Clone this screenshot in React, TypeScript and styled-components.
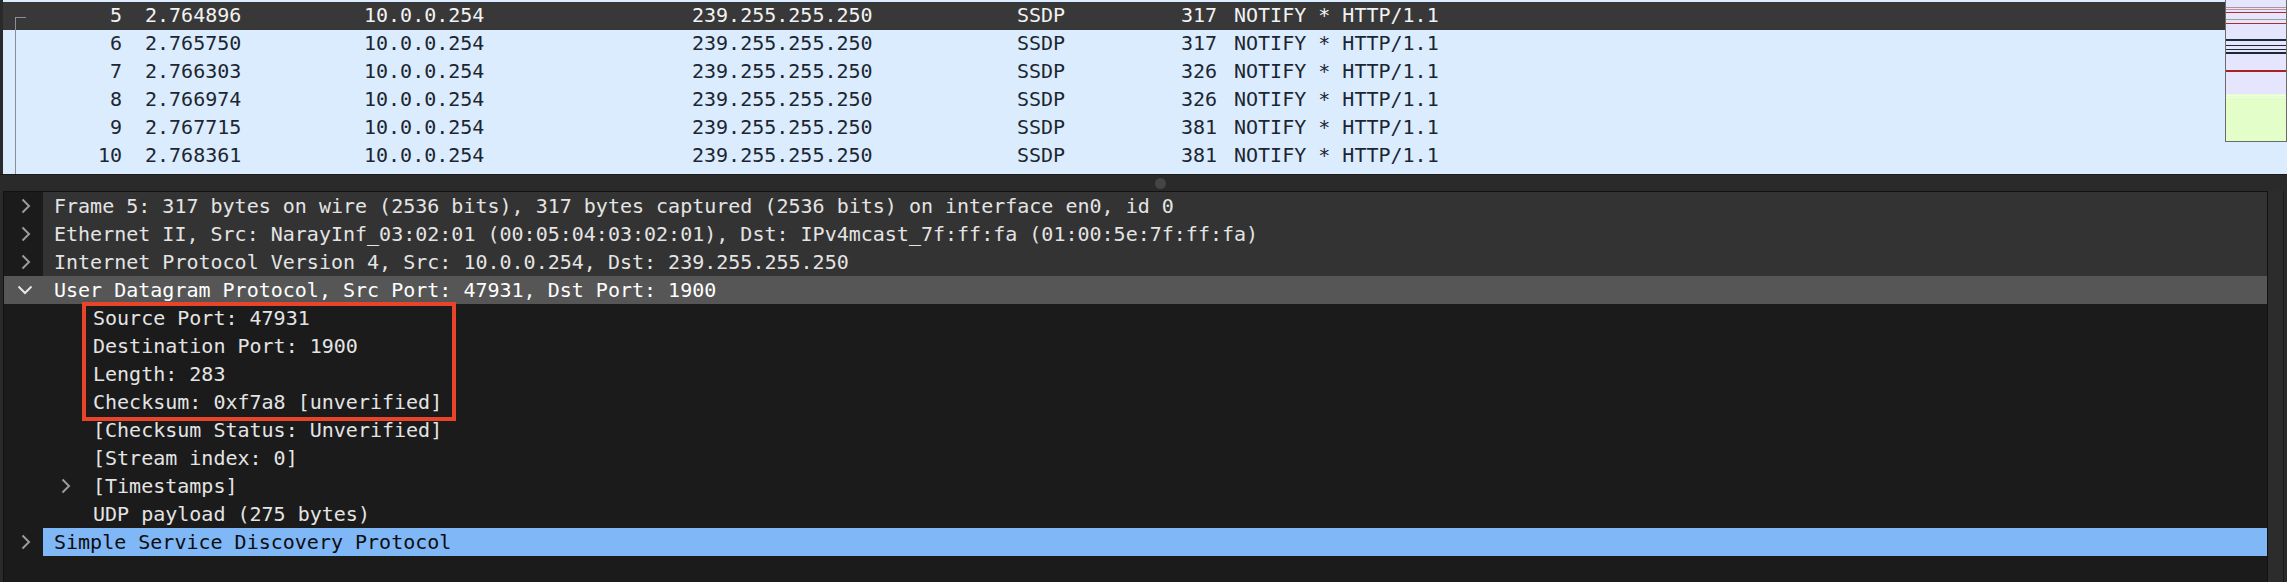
import React from 'react';
import styled, { createGlobalStyle, css } from 'styled-components';

const GlobalStyle = createGlobalStyle`
  html, body {
    margin: 0;
    padding: 0;
    background: #2a2a2a;
  }
  body {
    width: 2287px;
    height: 582px;
    overflow: hidden;
    font-family: "DejaVu Sans Mono", "Liberation Mono", monospace;
  }
`;

const Window = styled.div`
  width: 2287px;
  height: 582px;
  display: flex;
  flex-direction: column;
  background: #2a2a2a;
  overflow: hidden;
`;

/* ---------- packet list ---------- */

const PacketPane = styled.div`
  position: relative;
  height: 174px;
  margin-left: 3px;
  overflow: hidden;
  background: #dbecfe;
`;

const PacketList = styled.div`
  display: flex;
  flex-direction: column;
`;

type Tone = 'selected' | 'normal';
type Link = 'start' | 'mid' | 'none';

const PacketRow = styled.div<{ $tone: Tone }>`
  display: grid;
  grid-template-columns: 131px 219px 328px 325px 94px 123px 1fr;
  height: 28px;
  line-height: 27px;
  font-size: 20px;
  white-space: nowrap;
  background: ${(p) => (p.$tone === 'selected' ? '#383838' : '#dbecfe')};
  color: ${(p) => (p.$tone === 'selected' ? '#f2f2f2' : '#1b2631')};
`;

const Cell = styled.div<{ $align?: 'left' | 'right'; $pr?: number }>`
  position: relative;
  overflow: hidden;
  text-align: ${(p) => p.$align ?? 'left'};
  padding-left: ${(p) => (p.$align === 'right' ? 0 : 11)}px;
  padding-right: ${(p) => p.$pr ?? 0}px;
`;

const NoCell = styled(Cell)<{ $link: Link }>`
  ${(p) =>
    p.$link !== 'none' &&
    css`
      &::before {
        content: '';
        position: absolute;
        left: 12px;
        width: 1px;
        top: ${p.$link === 'start' ? '15px' : '0'};
        bottom: 0;
        background: #8a8f96;
      }
    `}
  ${(p) =>
    p.$link === 'start' &&
    css`
      &::after {
        content: '';
        position: absolute;
        left: 12px;
        top: 15px;
        width: 11px;
        height: 1px;
        background: #8a8f96;
      }
    `}
`;

const Minimap = styled.div`
  position: absolute;
  top: 0;
  right: 0;
  width: 60px;
  height: 141px;
  border: 1px solid #6b6b6b;
  border-top: none;
  background: #e5e5fd;
  svg {
    display: block;
  }
`;

/* ---------- splitter ---------- */

const Splitter = styled.div`
  height: 16px;
  border-top: 1px solid #1b1b1b;
  display: flex;
  align-items: center;
  padding-left: 1155px;
  background: #2a2a2a;
`;

const Handle = styled.div`
  width: 11px;
  height: 11px;
  border-radius: 50%;
  background: #454545;
`;

/* ---------- details tree ---------- */

const DetailArea = styled.div`
  flex: 1;
  display: flex;
  margin-left: 3px;
  min-height: 0;
`;

const Tree = styled.div`
  width: 2263px;
  border: 1px solid #121212;
  border-bottom: none;
  background: #1b1b1b;
  display: flex;
  flex-direction: column;
`;

const ScrollStrip = styled.div`
  width: 15px;
  background: #2c2c2c;
  border-right: 1px solid #1a1a1a;
`;

type RowKind = 'branch' | 'hover' | 'leaf' | 'selected';

const rowBg: Record<RowKind, string> = {
  branch: '#333333',
  hover: '#565656',
  leaf: '#1b1b1b',
  selected: '#80b7f6',
};
const rowFg: Record<RowKind, string> = {
  branch: '#e4e4e4',
  hover: '#ffffff',
  leaf: '#e4e4e4',
  selected: '#0d0d0d',
};

const TreeRow = styled.div<{ $kind: RowKind }>`
  display: flex;
  height: 28px;
  flex-shrink: 0;
  font-size: 20px;
  line-height: 28px;
  white-space: nowrap;
  background: ${(p) => (p.$kind === 'hover' ? rowBg.hover : '#1b1b1b')};
  color: ${(p) => rowFg[p.$kind]};
`;

const Gutter = styled.div<{ $open?: boolean }>`
  width: 39px;
  flex-shrink: 0;
  display: flex;
  align-items: center;
  padding-left: ${(p) => (p.$open ? 13 : 17)}px;
  box-sizing: border-box;
`;

const RowBody = styled.div<{ $kind: RowKind }>`
  flex: 1;
  display: flex;
  align-items: center;
  padding-left: 11px;
  background: ${(p) => rowBg[p.$kind]};
`;

const ArrowSlot = styled.div`
  width: 39px;
  flex-shrink: 0;
  display: flex;
  align-items: center;
  padding-left: 7px;
  box-sizing: border-box;
`;

const Callout = styled.div`
  position: relative;
  display: flex;
  flex-direction: column;
  &::after {
    content: '';
    position: absolute;
    left: 78px;
    top: -2px;
    width: 374px;
    height: 119px;
    box-sizing: border-box;
    border: 4px solid #e8442a;
    pointer-events: none;
  }
`;

const Chevron = ({ open, color }: { open?: boolean; color: string }) =>
  open ? (
    <svg width="16" height="10" viewBox="0 0 16 10">
      <path d="M1.5 1.5 L8 8 L14.5 1.5" fill="none" stroke={color} strokeWidth="2" />
    </svg>
  ) : (
    <svg width="10" height="16" viewBox="0 0 10 16">
      <path d="M1.5 1.5 L8 8 L1.5 14.5" fill="none" stroke={color} strokeWidth="2" />
    </svg>
  );

/* ---------- data ---------- */

type Packet = {
  no: number;
  time: string;
  len: number;
  tone: Tone;
  link: Link;
};

const packets: Packet[] = [
  { no: 5, time: '2.764896', len: 317, tone: 'selected', link: 'start' },
  { no: 6, time: '2.765750', len: 317, tone: 'normal', link: 'mid' },
  { no: 7, time: '2.766303', len: 326, tone: 'normal', link: 'mid' },
  { no: 8, time: '2.766974', len: 326, tone: 'normal', link: 'mid' },
  { no: 9, time: '2.767715', len: 381, tone: 'normal', link: 'mid' },
  { no: 10, time: '2.768361', len: 381, tone: 'normal', link: 'mid' },
  { no: 11, time: '2.769120', len: 384, tone: 'normal', link: 'mid' },
];

const topLevel = [
  'Frame 5: 317 bytes on wire (2536 bits), 317 bytes captured (2536 bits) on interface en0, id 0',
  'Ethernet II, Src: NarayInf_03:02:01 (00:05:04:03:02:01), Dst: IPv4mcast_7f:ff:fa (01:00:5e:7f:ff:fa)',
  'Internet Protocol Version 4, Src: 10.0.0.254, Dst: 239.255.255.250',
];

const boxed = ['Source Port: 47931', 'Destination Port: 1900', 'Length: 283', 'Checksum: 0xf7a8 [unverified]'];

const leaves: { text: string; arrow?: boolean }[] = [
  { text: '[Checksum Status: Unverified]' },
  { text: '[Stream index: 0]' },
  { text: '[Timestamps]', arrow: true },
  { text: 'UDP payload (275 bytes)' },
];

const MinimapDrawing = () => (
  <svg width="60" height="141" viewBox="0 0 60 141">
    <rect x="0" y="0" width="60" height="141" fill="#e5e5fd" />
    <rect x="0" y="7" width="60" height="1" fill="#9d9d9d" />
    <rect x="0" y="9" width="60" height="1" fill="#cf8a8a" />
    <rect x="0" y="12" width="60" height="1" fill="#b02a2a" />
    <rect x="0" y="19" width="60" height="1" fill="#9d9d9d" />
    <rect x="0" y="23" width="60" height="1" fill="#b02a2a" />
    <rect x="0" y="39" width="60" height="2" fill="#1c2a38" />
    <rect x="0" y="45" width="60" height="1" fill="#1c2a38" />
    <rect x="0" y="49" width="60" height="1" fill="#1c2a38" />
    <rect x="0" y="52" width="60" height="2" fill="#1c2a38" />
    <rect x="0" y="70" width="60" height="2" fill="#a82222" />
    <rect x="0" y="94" width="60" height="47" fill="#e3fec9" />
    <rect x="0" y="95" width="60" height="1" fill="#f1ffe6" />
    <rect x="0" y="97" width="60" height="1" fill="#eefede" />
  </svg>
);

const ScrolledTail = styled.div`
  height: 2px;
  background: #dbecfe;
`;

export default function App() {
  return (
    <>
      <GlobalStyle />
      <Window>
        <PacketPane>
          <PacketList>
            <ScrolledTail />
            {packets.map((p) => (
              <PacketRow key={p.no} $tone={p.tone}>
                <NoCell $align="right" $pr={12} $link={p.link}>
                  {p.no}
                </NoCell>
                <Cell>{p.time}</Cell>
                <Cell>10.0.0.254</Cell>
                <Cell>239.255.255.250</Cell>
                <Cell>SSDP</Cell>
                <Cell $align="right" $pr={6}>
                  {p.len}
                </Cell>
                <Cell>NOTIFY * HTTP/1.1</Cell>
              </PacketRow>
            ))}
          </PacketList>
          <Minimap>
            <MinimapDrawing />
          </Minimap>
        </PacketPane>

        <Splitter>
          <Handle />
        </Splitter>

        <DetailArea>
          <Tree>
            {topLevel.map((t) => (
              <TreeRow key={t} $kind="branch">
                <Gutter>
                  <Chevron color="#9a9a9a" />
                </Gutter>
                <RowBody $kind="branch">{t}</RowBody>
              </TreeRow>
            ))}
            <TreeRow $kind="hover">
              <Gutter $open>
                <Chevron open color="#e6e6e6" />
              </Gutter>
              <RowBody $kind="hover">User Datagram Protocol, Src Port: 47931, Dst Port: 1900</RowBody>
            </TreeRow>
            <Callout>
              {boxed.map((t) => (
                <TreeRow key={t} $kind="leaf">
                  <Gutter />
                  <RowBody $kind="leaf">
                    <ArrowSlot />
                    {t}
                  </RowBody>
                </TreeRow>
              ))}
            </Callout>
            {leaves.map((l) => (
              <TreeRow key={l.text} $kind="leaf">
                <Gutter />
                <RowBody $kind="leaf">
                  <ArrowSlot>{l.arrow && <Chevron color="#9a9a9a" />}</ArrowSlot>
                  {l.text}
                </RowBody>
              </TreeRow>
            ))}
            <TreeRow $kind="selected">
              <Gutter>
                <Chevron color="#9a9a9a" />
              </Gutter>
              <RowBody $kind="selected">Simple Service Discovery Protocol</RowBody>
            </TreeRow>
          </Tree>
          <ScrollStrip />
        </DetailArea>
      </Window>
    </>
  );
}
